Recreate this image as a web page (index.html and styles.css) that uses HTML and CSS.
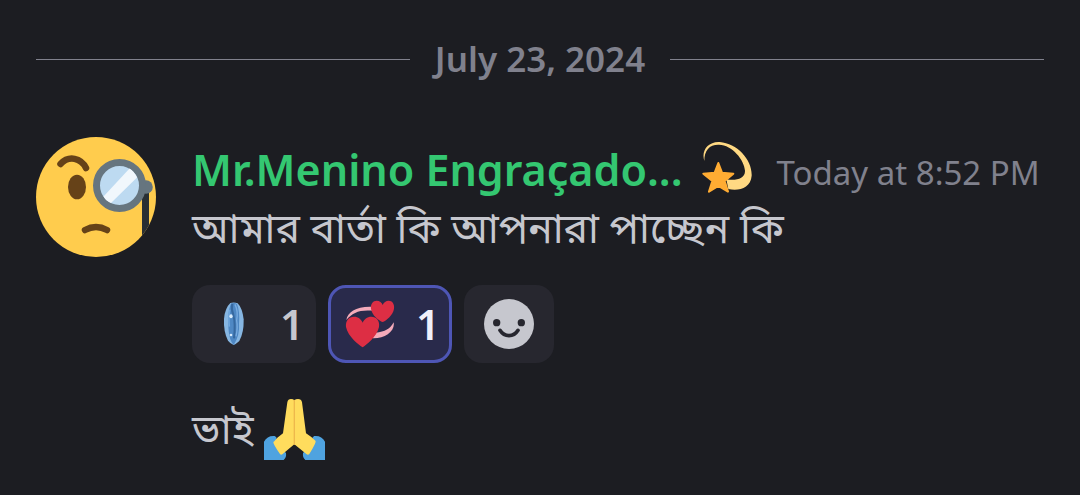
FILE: index.html
```html
<!DOCTYPE html>
<html lang="en">
<head>
    <meta charset="UTF-8">
    <meta name="viewport" content="width=device-width, initial-scale=1.0">
    <title>Chat</title>
    <link rel="stylesheet" href="styles.css">
</head>
<body>
    <main class="chat">
      <div class="divider"><time datetime="2024-07-23">July 23, 2024</time></div>
      <article class="message">
        <svg class="avatar" viewBox="0 0 120 120" role="img" aria-label="Avatar">
          <clipPath id="face"><circle cx="60" cy="60" r="60"/></clipPath>
          <g clip-path="url(#face)">
            <rect width="120" height="120" fill="#ffcc4d"/>
            <path d="M106 55h7v60h-7z" fill="#292f33"/>
          </g>
          <path d="M24.500 27C33 18 45 21 50 31" fill="none" stroke="#664218" stroke-width="6.500" stroke-linecap="round" stroke-linejoin="round"/>
          <ellipse cx="41" cy="50" rx="9" ry="12.300" fill="#664218"/>
          <path d="M49 93Q60 87 71 93" fill="none" stroke="#664218" stroke-width="6.500" stroke-linecap="round"/>
          <circle cx="110" cy="50" r="6.800" fill="#66757f"/>
          <circle cx="83.500" cy="48.500" r="23" fill="#bddaf1" stroke="#66757f" stroke-width="7"/>
          <path d="M67.500 59.500L93.500 31.500Q98 34 101 40.500L75 66Q70 64 67.500 59.500z" fill="#f1f7fc"/>
        </svg>
        <div class="body">
          <header class="head">
            <span class="name">Mr.Menino Engraçado...</span>
            <svg class="badge" viewBox="36 36 156 156" role="img" aria-label="Dizzy">
              <path d="M46 93C36 61 57 35 92 36C145 40 190 90 188 137C185 174 150 184 118 177L112 148C140 153 169 147 168 122C166 90 130 45 90 44C62 43 46 60 46 93z" fill="#ffd983"/>
              <path d="M88 99L99 128L133 131L107 153L117 185L88 168L60 185L70 153L43 131L77 128z" fill="#ffac33" stroke="#ffac33" stroke-width="6" stroke-linejoin="round"/>
            </svg>
            <time class="stamp">Today at 8:52 PM</time>
          </header>
          <p class="text" lang="bn">আমার বার্তা কি আপনারা পাচ্ছেন কি</p>
          <div class="reactions">
            <button class="reaction" type="button">
              <svg class="emoji" viewBox="73 72 150 150" role="img" aria-label="Crystal">
                <path d="M137 84Q148 80 159 85Q173 99 177 133Q178 173 164 198Q154 207 147 210Q136 205 130 197Q116 169 118 131Q121 99 137 84z" fill="#86b6e2"/>
                <path d="M139 86Q149 82 157 87Q166 110 163 146Q166 180 147 210Q129 193 131 130Q132 99 139 86z" fill="#4f88c4"/>
                <path d="M143 86Q139 103 146 120Q153 145 148 190" fill="none" stroke="#36689f" stroke-width="6"/>
                <path d="M151 88Q161 108 156 137Q160 157 154 184" fill="none" stroke="#79ace0" stroke-width="4"/>
                <path d="M135 104Q131 125 134 155" fill="none" stroke="#6fa6dc" stroke-width="5"/>
                <ellipse cx="139" cy="124" rx="5" ry="6" fill="#d8ebfb"/>
                <circle cx="139" cy="180" r="4" fill="#d8ebfb"/>
              </svg>
              <span>1</span>
            </button>
            <button class="reaction mine" type="button" aria-pressed="true">
              <svg class="emoji" viewBox="60 69 150 150" role="img" aria-label="Revolving hearts">
                <path d="M64 132C68 107 97 89 148 93V105C105 100 83 110 64 132zM206 139C211 165 180 188 143 187L152 170C180 168 196 158 206 139z" fill="#f4abba"/>
                <path d="M113 214C102 207 69 182 63 153C61 134 72 122 87 122C100 122 109 130 113 140C117 130 126 122 139 122C154 122 165 134 162 153C156 182 123 207 113 214z" fill="#dd2e44"/>
                <path d="M173 138C162 134 140 117 138 98C136 84 144 74 155 74C164 74 170 79 173 87C176 79 183 74 191 74C202 74 209 84 207 98C204 118 183 134 173 138z" fill="#dd2e44"/>
              </svg>
              <span>1</span>
            </button>
            <button class="reaction add" type="button" aria-label="Add reaction">
              <svg class="smile" viewBox="0 0 150 150">
                <circle cx="75" cy="75" r="75" fill="#c6c7ce"/>
                <circle cx="38" cy="71" r="11" fill="#27272f"/>
                <circle cx="112" cy="71" r="11" fill="#27272f"/>
                <path d="M48 94Q58 110 75 110T102 94" fill="none" stroke="#27272f" stroke-width="11" stroke-linecap="round"/>
              </svg>
            </button>
          </div>
          <p class="text second" lang="bn">
            <span>ভাই</span>
            <svg class="pray" viewBox="252 42 183 183" role="img" aria-label="Folded hands">
              <path d="M252 225V170Q262 151 284 153Q291 155 290 163L318 205Q320 217 311 225zM435 225V170Q425 151 403 153Q396 155 397 163L369 205Q367 217 376 225z" fill="#4fa3e0"/>
              <path d="M283 169L292 158L309 145L322 52Q324 42 333 42Q340 42 343 46Q347 42 354 42Q364 42 366 52L378 145L394 156L407 168Q408 175 388 207Q384 211 379 207L343 178L308 207Q303 211 300 207Q279 177 280 171z" fill="#ffdc5d"/>
              <path d="M343 46V178" fill="none" stroke="#eeb84c" stroke-width="4" stroke-linecap="round"/>
            </svg>
          </p>
        </div>
      </article>
    </main>
</body>
</html>
```

FILE: styles.css
```css
* {
  margin: 0;
  padding: 0;
  box-sizing: border-box;
}

body {
  font-family: "Noto Sans", "Noto Sans Bengali", sans-serif;
  background-color: #1c1d22;
  color: #c6c7ce;
}

.chat {
  padding: 35px 36px;
}

.divider {
  display: flex;
  align-items: center;
  gap: 25px;
  color: #80818d;
  font-size: 35px;
  font-weight: 600;
  line-height: 48px;
}

.divider::before,
.divider::after {
  content: "";
  flex: 1;
  height: 1px;
  background-color: #80818d;
}

.message {
  display: flex;
  gap: 36px;
  margin-top: 54px;
}

.avatar {
  flex: none;
  width: 120px;
  height: 120px;
}

.body {
  flex: 1;
  min-width: 0;
}

.head {
  display: flex;
  align-items: center;
  height: 62px;
  white-space: nowrap;
}

.name {
  padding-top: 2px;
  color: #34c771;
  font-size: 43px;
  font-weight: 600;
}

.badge {
  flex: none;
  width: 52px;
  height: 52px;
  margin: 0 24px 0 18px;
}

.stamp {
  padding-top: 8px;
  color: #80818d;
  font-size: 33px;
}

.text {
  padding-top: 8px;
  font-family: "Noto Sans Bengali", "Noto Sans", sans-serif;
  font-size: 41px;
  line-height: 52px;
}

.reactions {
  display: flex;
  gap: 12px;
  margin-top: 26px;
}

.reaction {
  display: flex;
  align-items: center;
  justify-content: space-between;
  width: 124px;
  height: 78px;
  padding: 0 12px 0 17px;
  border: none;
  border-radius: 18px;
  background-color: #27272f;
  color: #c6c7ce;
  font-family: inherit;
  font-size: 42px;
  font-weight: 600;
  line-height: 48px;
  cursor: pointer;
}

.reaction.mine {
  padding: 0 9px 0 14px;
  border: 3px solid #4e56b5;
  background-color: #292a4b;
  color: #f0f0fa;
}

.reaction.add {
  justify-content: center;
  width: 90px;
  padding: 0;
}

.emoji,
.smile {
  flex: none;
  width: 50px;
  height: 50px;
}

.second {
  display: flex;
  align-items: flex-end;
  gap: 10px;
  margin-top: 28px;
}

.pray {
  width: 61px;
  height: 61px;
}
```
